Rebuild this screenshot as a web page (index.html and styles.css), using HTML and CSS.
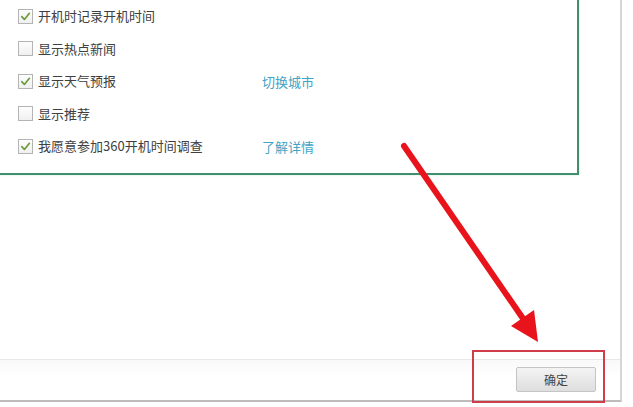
FILE: index.html
```html
<!DOCTYPE html>
<html lang="zh">
<head>
<meta charset="utf-8">
<link rel="stylesheet" href="styles.css">
</head>
<body>
<div class="window">
  <div class="panel">
    <div class="row">
      <label class="opt"><span class="cb checked"><svg viewBox="0 0 14 14"><path d="M3 7.2 L5.8 10.2 L11.2 3.6" /></svg></span>开机时记录开机时间</label>
    </div>
    <div class="row">
      <label class="opt"><span class="cb"></span>显示热点新闻</label>
    </div>
    <div class="row">
      <label class="opt"><span class="cb checked"><svg viewBox="0 0 14 14"><path d="M3 7.2 L5.8 10.2 L11.2 3.6" /></svg></span>显示天气预报</label>
      <a class="link">切换城市</a>
    </div>
    <div class="row">
      <label class="opt"><span class="cb"></span>显示推荐</label>
    </div>
    <div class="row">
      <label class="opt"><span class="cb checked"><svg viewBox="0 0 14 14"><path d="M3 7.2 L5.8 10.2 L11.2 3.6" /></svg></span>我愿意参加360开机时间调查</label>
      <a class="link">了解详情</a>
    </div>
  </div>
  <div class="spacer"></div>
  <div class="footer">
    <button class="btn">确定</button>
  </div>
</div>
<div class="highlight"></div>
<svg class="arrow" viewBox="0 0 633 407" width="633" height="407">
  <line x1="404" y1="146" x2="524" y2="320" />
  <polygon points="538,342 511,326 534,310" />
</svg>
</body>
</html>
```
FILE: styles.css
```css
html, body {
  margin: 0;
  padding: 0;
  background: #ffffff;
}
body {
  width: 633px;
  height: 407px;
  overflow: hidden;
  position: relative;
  font-family: "Noto Sans CJK SC", "Noto Sans", sans-serif;
  font-size: 13px;
  color: #404040;
}
.window {
  width: 620px;
  height: 400px;
  border-right: 2px solid #d6d6d6;
  border-bottom: 2px solid #bdbdbd;
  display: flex;
  flex-direction: column;
  background: #fff;
}
.panel {
  margin-left: -2px;
  margin-top: -2px;
  width: 581px;
  border: 2px solid #3f8f6e;
  box-shadow: 0 0 2px rgba(90,200,150,0.35);
  padding: 0 0 10px 18px;
  box-sizing: border-box;
}
.row {
  height: 32.5px;
  display: grid;
  grid-template-columns: 244px auto;
  align-items: center;
}
.opt {
  display: flex;
  align-items: center;
  gap: 5px;
  white-space: nowrap;
  line-height: 16px;
}
.cb {
  width: 13px;
  height: 13px;
  border: 1px solid #b4b4b4;
  background: linear-gradient(#fdfdfd, #f0f0f0);
  display: inline-flex;
  align-items: center;
  justify-content: center;
  flex: none;
}
.cb svg {
  width: 13px;
  height: 13px;
}
.cb svg path {
  fill: none;
  stroke: #6c9b35;
  stroke-width: 1.8;
  stroke-linecap: round;
  stroke-linejoin: round;
}
.link {
  color: #42a3c4;
  text-decoration: none;
  white-space: nowrap;
}
.spacer {
  flex: 1;
}
.footer {
  height: 41px;
  border-top: 1px solid #e8e8e8;
  background: linear-gradient(#f9f9f9, #ffffff 40%);
  display: flex;
  justify-content: flex-end;
  align-items: flex-start;
  padding: 7px 24px 0 0;
  box-sizing: border-box;
}
.btn {
  width: 80px;
  height: 25px;
  border: 1px solid #c4c4c4;
  border-radius: 2px;
  background: linear-gradient(#f4f4f4, #dedede);
  font-family: "Noto Sans CJK SC", sans-serif;
  font-size: 12px;
  color: #444;
  padding: 0;
}
.highlight {
  position: absolute;
  left: 472px;
  top: 350px;
  width: 129px;
  height: 49px;
  border: 2px solid #cf3c4a;
}
.arrow {
  position: absolute;
  left: 0;
  top: 0;
  pointer-events: none;
}
.arrow line {
  stroke: #e8131b;
  stroke-width: 6;
  stroke-linecap: round;
}
.arrow polygon {
  fill: #e8131b;
}
```
